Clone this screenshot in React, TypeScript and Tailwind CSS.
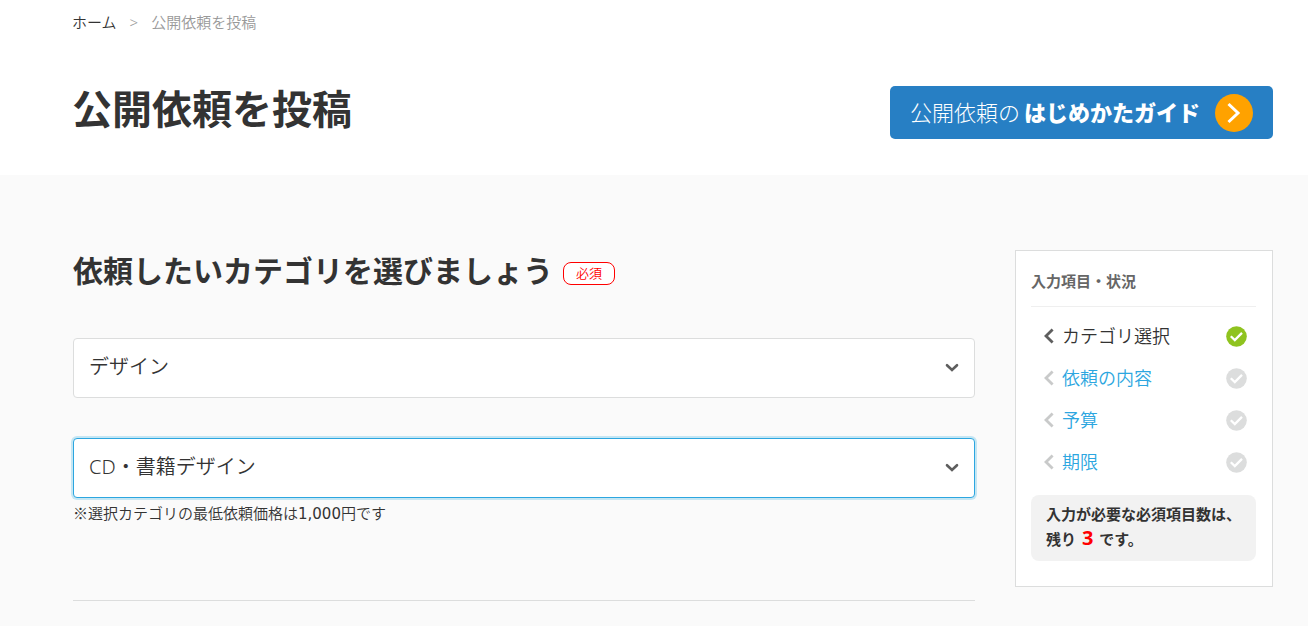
import React, { useState } from 'react';

const steps = [
  { label: 'カテゴリ選択', done: true },
  { label: '依頼の内容', done: false },
  { label: '予算', done: false },
  { label: '期限', done: false },
];

const CheckCircle: React.FC<{ done: boolean }> = ({ done }) => (
  <svg
    viewBox="0 0 21 21"
    className={done ? 'h-[21px] w-[21px] text-[#8fc31f]' : 'h-[21px] w-[21px] text-[#dcdddd]'}
    aria-hidden="true"
  >
    <circle cx="10.5" cy="10.5" r="10.3" fill="currentColor" />
    <path d="M4.8 10.2l4 3.9L16 6.9" fill="none" stroke="#fff" strokeWidth="2.3" />
  </svg>
);

const CategorySelect: React.FC<{
  label: string;
  options: string[];
  active?: boolean;
}> = ({ label, options, active }) => {
  const [value, setValue] = useState(options[0]);

  return (
    <div className="relative">
      <select
        aria-label={label}
        value={value}
        onChange={(e) => setValue(e.target.value)}
        className={
          active
            ? 'block h-[60px] w-full appearance-none rounded border border-[#2ca6e0] bg-white pr-12 pb-0.5 pl-[15px] text-xl shadow-[0_0_0_2px_#c5e6f3] outline-none'
            : 'block h-[60px] w-full appearance-none rounded border border-[#dcdddd] bg-white pr-12 pb-0.5 pl-[15px] text-xl outline-none'
        }
      >
        {options.map((option) => (
          <option key={option}>{option}</option>
        ))}
      </select>
      <svg
        viewBox="0 0 14 10"
        className="pointer-events-none absolute top-[25px] right-4 h-[10px] w-[14px]"
        aria-hidden="true"
      >
        <path d="M2 2.2l5 4.8 5-4.8" fill="none" stroke="#5e5e5e" strokeWidth="2.6" strokeLinecap="round" />
      </svg>
    </div>
  );
};

const App: React.FC = () => {
  return (
    <div className="flex min-h-screen flex-col bg-white font-['Noto_Sans','Noto_Sans_CJK_JP',sans-serif] font-[350] text-[#333]">
      {/* パンくずと見出し */}
      <header className="pr-[35px] pb-9 pl-[72px]">
        <nav className="flex gap-[13px] pt-3 text-[15px] leading-5" aria-label="パンくず">
          <a href="#">ホーム</a>
          <span className="text-[#999]">&gt;</span>
          <span className="text-[#999]">公開依頼を投稿</span>
        </nav>
        <div className="mt-[54px] flex items-center justify-between">
          <h1 className="pb-2 text-[40px] leading-[45px] font-bold">公開依頼を投稿</h1>
          <a
            href="#"
            className="flex h-[53px] items-center gap-[15px] rounded-[5px] bg-[#277fc4] px-5 font-['Noto_Sans_CJK_JP',sans-serif] text-[22px] text-white"
          >
            <span className="flex gap-1 pb-0.5">
              <span className="font-light">公開依頼の</span>
              <span className="font-black">はじめかたガイド</span>
            </span>
            <svg viewBox="0 0 38 38" className="h-[38px] w-[38px]" aria-hidden="true">
              <circle cx="19" cy="19" r="19" fill="#ffa200" />
              <path d="M13.5 10l9.5 9-9.5 9" fill="none" stroke="#fff" strokeWidth="3" />
            </svg>
          </a>
        </div>
      </header>

      {/* 入力フォーム */}
      <div className="flex flex-1 items-start gap-10 bg-[#fafafa] pt-[75px] pr-[35px] pl-[73px]">
        <main className="min-w-0 flex-1 border-b border-[#dcdddd] pb-[75px]">
          <div className="flex items-center gap-[10px]">
            <h2 className="text-[30px] leading-[42px] font-bold">依頼したいカテゴリを選びましょう</h2>
            <span className="mt-1 rounded-lg border border-[#f00] bg-white px-3 text-[13px] leading-[21px] text-[#f00]">
              必須
            </span>
          </div>
          <div className="mt-[46px] flex flex-col gap-10">
            <CategorySelect label="カテゴリ" options={['デザイン']} />
            <CategorySelect label="サブカテゴリ" options={['CD・書籍デザイン']} active />
          </div>
          <p className="mt-1 font-['Noto_Sans_CJK_JP',sans-serif] text-[15px] leading-[21px]">
            ※選択カテゴリの最低依頼価格は
            <span className="font-['DejaVu_Sans',sans-serif] font-normal">1,000</span>円です
          </p>
        </main>

        {/* 入力状況 */}
        <aside className="w-[258px] shrink-0 border border-[#dcdddd] bg-white pt-5 pr-4 pb-[25px] pl-[15px]">
          <h3 className="border-b border-[#efefef] pb-[14px] text-[15px] leading-[21px] font-bold text-[#666]">
            入力項目・状況
          </h3>
          <ul className="mt-2">
            {steps.map((step) => (
              <li key={step.label} className="flex h-[42px] items-center pr-[9px] pl-3">
                <svg
                  viewBox="0 0 11 16"
                  className={step.done ? 'h-4 w-[11px] text-[#5e5e5e]' : 'h-4 w-[11px] text-[#c9caca]'}
                  aria-hidden="true"
                >
                  <path d="M9.6 1.5L3 8l6.6 6.5" fill="none" stroke="currentColor" strokeWidth="2.8" />
                </svg>
                <a
                  href="#"
                  className={step.done ? 'ml-2 flex-1 text-lg leading-6' : 'ml-2 flex-1 text-lg leading-6 text-[#2ca6e0]'}
                >
                  {step.label}
                </a>
                <CheckCircle done={step.done} />
              </li>
            ))}
          </ul>
          <p className="mt-3 rounded-lg bg-[#f2f2f2] pt-[7px] pb-[9px] pl-[15px] text-[15px] leading-[25px] font-bold">
            入力が必要な必須項目数は、
            <br />
            残り <span className="mx-0.5 text-xl leading-none text-[#f00]">3</span> です。
          </p>
        </aside>
      </div>
    </div>
  );
};

export default App;
